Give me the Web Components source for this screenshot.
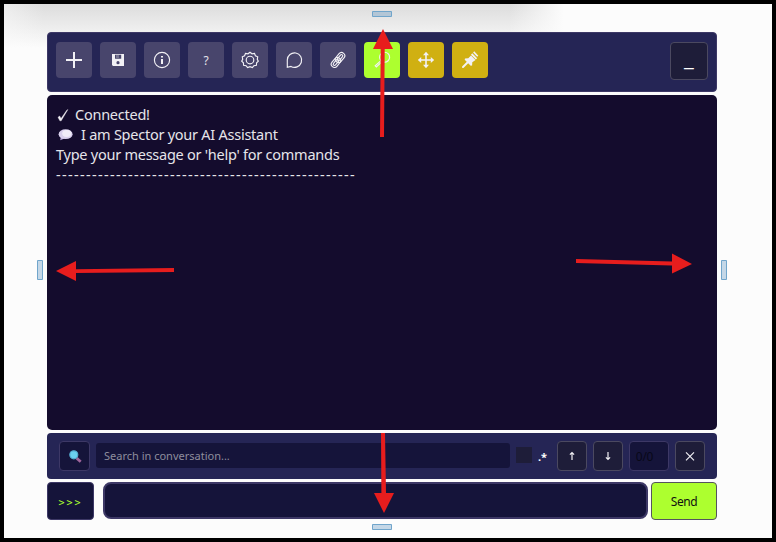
<!DOCTYPE html>
<html lang="en"><head><meta charset="utf-8"><title>Spector</title>
<style>html,body{margin:0;height:100%;overflow:hidden}body{font-family:"Noto Sans","Open Sans",sans-serif}</style></head>
<body><spector-app></spector-app>
<script>
const define=(name,html)=>customElements.define(name,class extends HTMLElement{
  constructor(){super();this.attachShadow({mode:'open'}).innerHTML=html;}
});
const icons={
 plus:'<path d="M12 4v16M4 12h16" stroke-width="2"/>',
 save:'<path d="M6 6h12v12H7l-1-1z" fill="currentColor" stroke="none"/><path d="M9 6.8h6.2v4H9zM12 13.1a1.6 1.6 0 1 1 0 3.2 1.6 1.6 0 0 1 0-3.2" fill="#48456c" stroke="none"/><path d="M10 7h3v3h-3z" fill="#777591" stroke="none"/>',
 info:'<circle cx="12" cy="12" r="7.6"/><path d="M12 11v5" stroke-width="2"/><path d="M12 8v1.6" stroke-width="2"/>',
 gear:'<circle cx="12" cy="12" r="3.8"/><path d="M12 4.3 14 5.8l2.5-.4.9 2.4 2.3 1-.4 2.5 1 1.9-1.7 1.6-.2 2.5-2.500.4-1.500 1.900-2.400-.9-2.400.9-1.500-1.900-2.500-.4-.2-2.500-1.700-1.600 1-1.900-.4-2.500 2.300-1 .9-2.400 2.500.4z"/>',
 chat:'<path d="M5.300 19.300V12A7.200 7.200 0 1 1 9 18.400z"/>',
 clip:'<g transform="rotate(-50 12 12)"><rect x="3.300" y="8.800" width="11" height="6.400" rx="3.200"/><rect x="5.300" y="10.700" width="7" height="2.600" rx="1.300"/><rect x="9.700" y="8.800" width="11" height="6.400" rx="3.200"/><rect x="11.700" y="10.700" width="7" height="2.600" rx="1.300"/></g>',
 find:'<circle cx="14.600" cy="9.200" r="5"/><path d="m10.400 13.100-5.200 4.700 1.200 1.200 5.100-4.800"/>',
 move:'<path d="M12 6v12M6 12h12" stroke-width="1.600"/><path d="m12 3.800 3 3.400H9zM12 20.200l3-3.400H9zM3.800 12l3.400-3v6zM20.200 12l-3.400-3v6z" fill="currentColor" stroke="none"/>',
 pin:'<path d="m5 19 5-5" stroke-width="2" stroke-linecap="round"/><path d="m7 10.400 3.300-.2 2.700-2.700 4.500 4.500-3.200 2.200-.2 3.200-1.400.4-6-6z" fill="currentColor" stroke="none"/><path d="m13.600 6 4.900 4.900" stroke-width="1.800"/><path d="m15.700 3.900 4 4.300" stroke-width="1.600"/>',
 lens:'<path d="m13.600 14.100 4.100 3.600" stroke="#a0659b" stroke-width="2.800"/><circle cx="10.800" cy="10.800" r="4" fill="#6bd0f0" stroke="#55acd1"/>',
 up:'<path d="M12 8.500v7.500M9.900 10.600 12 8.500l2.100 2.100" stroke-width="1.200"/>',
 down:'<path d="M12 8v7.500M9.900 13.400 12 15.500l2.100-2.100" stroke-width="1.200"/>',
 close:'<path d="m8 8.300 8 8m0-8-8 8"/>',
 check:'<path d="m2 10.300 1.700-1.300 1.300 2.600 5.600-8.200 1.300-.9-6.700 11.300H3.900z" fill="currentColor" stroke="currentColor" stroke-width=".4"/>',
 bubble:'<path d="m5 10.500-.8 3.700 4.900-2z" fill="#b7a7db" stroke="none"/><ellipse cx="9.600" cy="8.200" rx="7" ry="4.900" fill="#d9d0ed" stroke="none"/><ellipse cx="10.800" cy="7.500" rx="4.600" ry="3.400" fill="#f0ecf8" stroke="none"/>'
};
customElements.define('ui-icon',class extends HTMLElement{connectedCallback(){
 const s=this.getAttribute('size')||24;
 this.attachShadow({mode:'open'}).innerHTML=`<style>:host{display:inline-flex;color:#f2f1f5}svg{display:block;fill:none;stroke:currentColor;stroke-width:1.15}</style><svg width="${s}" height="${s}" viewBox="0 0 ${s} ${s}">${icons[this.getAttribute('name')]}</svg>`;
}});
define('tool-button',`<style>:host{box-sizing:border-box;display:flex;align-items:center;justify-content:center;flex:none;width:36px;height:36px;border-radius:4px;background:#48456c;color:#e5e4eb;font-size:12px}
:host([tone=lime]){background:#adff2f}:host([tone=gold]){background:#d0b012}
:host([tone=dark]){width:38px;height:38px;background:#1e1d39;border:1px solid #4b4960;color:#fff}
:host([tone=dark]) slot{display:block;padding-bottom:6px}</style><slot></slot>`);
define('small-button',`<style>:host{box-sizing:border-box;display:flex;align-items:center;justify-content:center;flex:none;width:30px;height:30px;border:1px solid #4b4960;border-radius:4px;background:#1e1d39}
:host([kind=find]){width:31px;background:#15143a;border-color:#3d3866}
:host([kind=count]){width:40px;background:#15143a;border-color:#3d3866;color:#080818;font-size:12px;letter-spacing:-.3px;padding-right:9px}</style><slot></slot>`);
define('tool-bar',`<style>:host{box-sizing:border-box;display:flex;gap:8px;height:60px;padding:9px 8px;border:1px solid #3d3866;border-radius:4px;background:#252555}.fill{flex:1}</style>
<tool-button><ui-icon name="plus"></ui-icon></tool-button><tool-button><ui-icon name="save"></ui-icon></tool-button><tool-button><ui-icon name="info"></ui-icon></tool-button><tool-button>?</tool-button><tool-button><ui-icon name="gear"></ui-icon></tool-button><tool-button><ui-icon name="chat"></ui-icon></tool-button><tool-button><ui-icon name="clip"></ui-icon></tool-button><tool-button tone="lime"><ui-icon name="find"></ui-icon></tool-button><tool-button tone="gold"><ui-icon name="move"></ui-icon></tool-button><tool-button tone="gold"><ui-icon name="pin"></ui-icon></tool-button><span class="fill"></span><tool-button tone="dark"><span style="font-size:22px;line-height:20px">_</span></tool-button>`);
define('chat-log',`<style>:host{box-sizing:border-box;display:block;height:335px;padding:10px 9px;border-radius:5px;background:#140c2d;color:#e6e5ea;font-size:14.5px;letter-spacing:-.25px}
div{display:flex;height:20px;line-height:19px;white-space:pre}.a{gap:3px}.b{gap:7px}ui-icon{align-self:center}.rule{letter-spacing:1.330px}</style>
<div class="a"><ui-icon name="check" size="16"></ui-icon><span>Connected!</span></div><div class="b"><ui-icon name="bubble" size="18"></ui-icon><span>I am Spector your AI Assistant</span></div><div><span>Type your message or 'help' for commands</span></div><div class="rule"><span>--------------------------------------------------</span></div>`);
define('search-bar',`<style>:host{box-sizing:border-box;display:flex;align-items:flex-start;gap:6px;height:46px;padding:8px 12px;border-radius:4px;background:#252555}
.input{box-sizing:border-box;flex:1;height:25px;margin-top:2px;padding-left:8px;border-radius:3px;background:#15143a;color:#8e8d9d;font-size:11px;line-height:26px}.box{width:16px;height:16px;margin-top:6px;background:#1e1d39}.rx{width:13px;color:#fff;font-size:11px;font-weight:700;line-height:32px}</style>
<small-button kind="find"><ui-icon name="lens"></ui-icon></small-button><div class="input"><span>Search in conversation...</span></div><div class="box"></div><div class="rx">.*</div><small-button><ui-icon name="up"></ui-icon></small-button><small-button><ui-icon name="down"></ui-icon></small-button><small-button kind="count">0/0</small-button><small-button><ui-icon name="close"></ui-icon></small-button>`);
define('message-bar',`<style>:host{display:flex;height:38px}div{box-sizing:border-box}.prompt,.send{display:flex;align-items:center;justify-content:center;border-radius:4px}
.prompt{width:47px;padding-top:2px;background:#15143a;border:1px solid #3d3866;color:#adff2f;font:10px "DejaVu Sans Mono",monospace;letter-spacing:2px}.entry{flex:1;height:37px;margin:0 3px 0 9px;border:2px solid #3d3866;border-radius:8px;background:#15143a}.send{width:66px;background:#adff2f;border:1px solid #55535f;color:#111;font-size:12px;letter-spacing:-.45px}</style><div class="prompt">&gt;&gt;&gt;</div><div class="entry"></div><div class="send"><span>Send</span></div>`);
define('callout-layer',`<style>:host{position:absolute;inset:0}svg{display:block}</style><svg width="776" height="542"><g fill="#c4d7e7" stroke="#70a5cb"><path d="M372.500 11.500h19v5h-19z" fill="#b3c6d6"/><path d="M372.500 524.500h19v5h-19zM37.500 260.500h5v19h-5zM721.500 260.500h5v19h-5z"/></g>
<g fill="#e71d1d"><path d="m383 29 10 20h-8.300l-.7 88h-4l.7-88H373zM381 433h4l1 60h8l-10 20-10-20h7.400zM56 271l20-10v8.200l98-1.200v4l-98 1v8zM576 259l96 2.500v-8l20 10.500-20 9.500v-8l-96-2.500z"/></g></svg>`);
define('spector-app',`<style>:host{position:relative;box-sizing:border-box;display:flex;flex-direction:column;gap:3px;width:776px;height:542px;padding:28px 55px 18px 43px;border:4px solid #000;background:linear-gradient(90deg,#fcfcfc80 0,#fcfcfc00 40px,#fcfcfc00 505px,#fcfcfc 560px),linear-gradient(#dcdcdc,#fcfcfc 44px)}callout-layer{inset:-4px}</style><tool-bar></tool-bar><chat-log></chat-log><search-bar></search-bar><message-bar></message-bar><callout-layer></callout-layer>`);
</script></body></html>
